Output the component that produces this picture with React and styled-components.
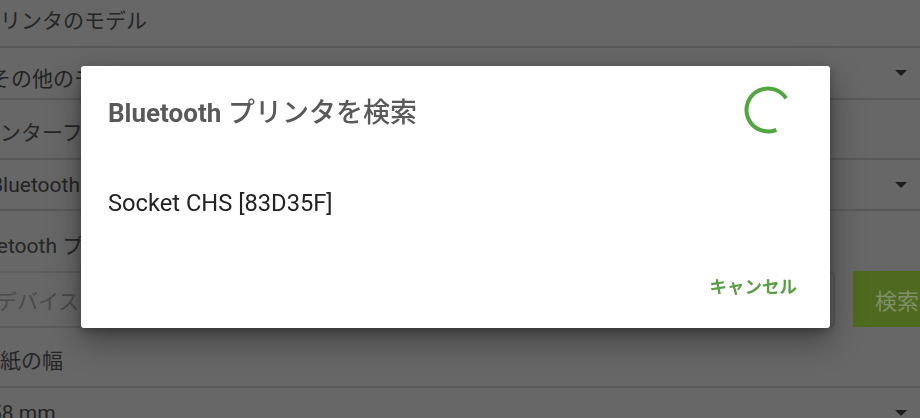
import React from "react";
import styled, { createGlobalStyle } from "styled-components";

const GlobalStyle = createGlobalStyle`
  html, body { margin: 0; padding: 0; }
  body {
    width: 920px;
    height: 418px;
    overflow: hidden;
    background: #676767;
    font-family: Roboto, "Noto Sans CJK JP", sans-serif;
  }
`;

const Page = styled.div`
  display: flex;
  flex-direction: column;
  margin: -14px 0 0 -21px;
  width: 941px;
  height: 432px;
  overflow: hidden;
`;

const LabelRow = styled.div`
  height: ${(p) => p.$h || 60}px;
  flex-shrink: 0;
  box-sizing: border-box;
  display: flex;
  align-items: flex-end;
  padding: 0 0 13px;
  margin-left: ${(p) => p.$indent || 0}px;
  border-bottom: ${(p) => (p.$line ? "2px solid #595959" : "none")};
  font-size: 21px;
  line-height: 24px;
  color: #262626;
`;

const ValueRow = styled.div`
  height: ${(p) => p.$h || 51}px;
  flex-shrink: 0;
  box-sizing: border-box;
  display: flex;
  align-items: center;
  justify-content: space-between;
  padding: ${(p) => p.$shift || 0}px 13px 0 11px;
  border-bottom: 2px solid #595959;
  font-size: 21px;
  color: #232323;
`;

const Arrow = styled.span`
  width: 0;
  height: 0;
  margin-top: ${(p) => -(p.$up || 0)}px;
  border-left: 6px solid transparent;
  border-right: 6px solid transparent;
  border-top: 6px solid #1c1c1c;
`;

const InputRow = styled.div`
  display: flex;
  flex-shrink: 0;
  align-items: stretch;
  gap: 18px;
  height: 57px;
`;

const InputBox = styled.div`
  width: 856px;
  box-sizing: border-box;
  border: 2px solid #5c5c5c;
  border-radius: 5px;
  display: flex;
  align-items: center;
  padding-left: 15px;
  font-size: 21px;
  color: #4a4a4a;
`;

const SearchButton = styled.div`
  flex: 1;
  margin: 0 0 1px;
  background: #4e6a1e;
  display: flex;
  align-items: center;
  padding-left: 22px;
  font-size: 22px;
  color: #7f8f6a;
`;

const Dialog = styled.div`
  position: fixed;
  left: 81px;
  top: 66px;
  width: 749px;
  height: 262px;
  background: #ffffff;
  border-radius: 3px;
  box-shadow: 0 12px 32px rgba(0, 0, 0, 0.38), 0 4px 10px rgba(0, 0, 0, 0.25);
  display: flex;
  flex-direction: column;
`;

const Header = styled.div`
  display: flex;
  align-items: center;
  justify-content: space-between;
  height: 48px;
  padding: 20px 38px 0 27px;
`;

const Title = styled.h2`
  margin: 6px 0 0;
  font-size: 27px;
  line-height: 30px;
  font-weight: 500;
  color: #595959;
`;

const Strong = styled.span`
  font-size: 26px;
  font-weight: 700;
`;

const Spinner = styled.svg`
  width: 48px;
  height: 48px;
  display: block;
`;

const DeviceItem = styled.div`
  margin-top: 55px;
  padding-left: 27px;
  font-size: 23.7px;
  line-height: 28px;
  color: #222222;
`;

const Actions = styled.div`
  margin-top: auto;
  display: flex;
  justify-content: flex-end;
  padding: 0 33px 21px 0;
`;

const TextButton = styled.button`
  border: none;
  background: none;
  padding: 8px 0;
  font-family: Roboto, "Noto Sans CJK JP", sans-serif;
  font-size: 17.5px;
  line-height: 24px;
  font-weight: 700;
  color: #5a9e45;
`;

export default function App() {
  const r = 21.5;
  const c = 2 * Math.PI * r;
  const arc = (c * 258) / 360;
  return (
    <>
      <GlobalStyle />
      <Page>
        <LabelRow $h={62} $line>プリンタのモデル</LabelRow>
        <ValueRow $h={52} $shift={8}>
          <span>その他のモデル</span>
          <Arrow $up={8} />
        </ValueRow>
        <LabelRow $line>インターフェース</LabelRow>
        <ValueRow>
          <span>Bluetooth</span>
          <Arrow />
        </ValueRow>
        <LabelRow $indent={-12}>Bluetooth プリンタ</LabelRow>
        <InputRow>
          <InputBox>デバイスを選択</InputBox>
          <SearchButton>検索</SearchButton>
        </InputRow>
        <LabelRow $line>用紙の幅</LabelRow>
        <ValueRow $h={52}>
          <span>58 mm</span>
          <Arrow />
        </ValueRow>
      </Page>
      <Dialog>
        <Header>
          <Title>
            <Strong>Bluetooth</Strong> プリンタを検索
          </Title>
          <Spinner viewBox="0 0 48 48">
            <circle
              cx="24"
              cy="24"
              r={r}
              fill="none"
              stroke="#52a540"
              strokeWidth="4"
              strokeDasharray={`${arc} ${c}`}
              transform="rotate(67 24 24)"
            />
          </Spinner>
        </Header>
        <DeviceItem>Socket CHS [83D35F]</DeviceItem>
        <Actions>
          <TextButton>キャンセル</TextButton>
        </Actions>
      </Dialog>
    </>
  );
}
